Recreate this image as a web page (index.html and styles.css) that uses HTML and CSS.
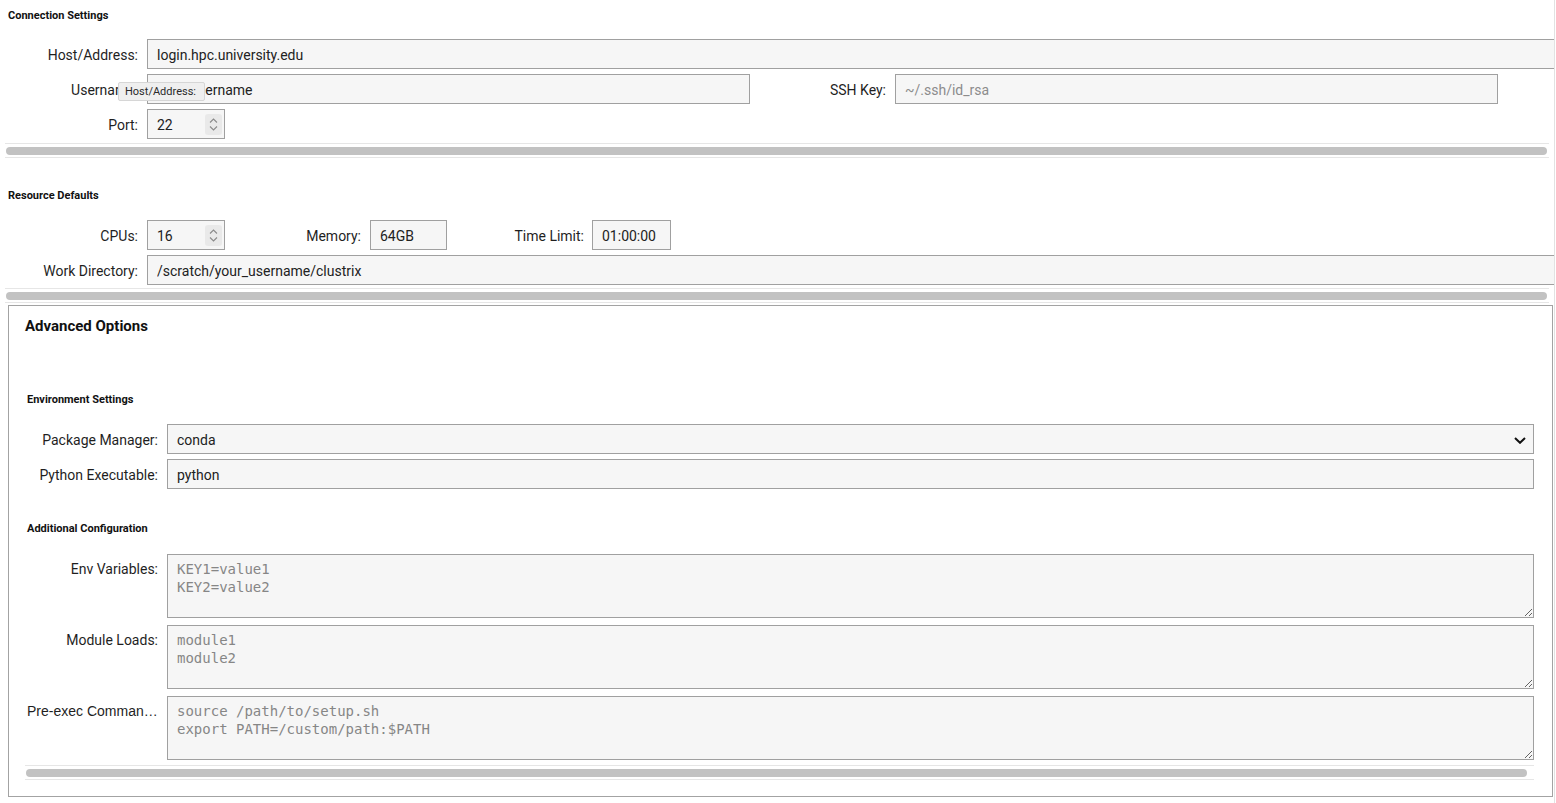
FILE: index.html
```html
<!DOCTYPE html>
<html lang="en">
<head>
  <meta charset="UTF-8" />
  <title>Cluster Settings</title>
  <link rel="stylesheet" href="styles.css">
</head>
<body>
<div class="page">

  <!-- Connection -->
  <section class="group group-conn">
    <h3 class="group-title">Connection Settings</h3>
    <div class="row">
      <label class="lbl" for="host">Host/Address:</label>
      <input class="field field-stretch" id="host" type="text" value="login.hpc.university.edu" />
    </div>
    <div class="row">
      <label class="lbl" for="user">Username:</label>
      <input class="field w-603" id="user" type="text" value="your_username" />
      <label class="lbl lbl-key" for="key">SSH Key:</label>
      <input class="field w-603" id="key" type="text" placeholder="~/.ssh/id_rsa" />
    </div>
    <div class="row">
      <label class="lbl">Port:</label>
      <div class="field spin">
        <span>22</span>
        <svg width="17" height="21" viewBox="0 0 17 21">
          <rect x="0" y="0" width="17" height="21" rx="3" fill="#e9e9e9"/>
          <path d="M5 8.5 L8.5 5 L12 8.5" stroke="#8a8a8a" stroke-width="1.1" fill="none"/>
          <path d="M5 12.5 L8.5 16 L12 12.5" stroke="#8a8a8a" stroke-width="1.1" fill="none"/>
        </svg>
      </div>
    </div>
    <div class="hscroll"><div class="thumb"></div></div>
  </section>

  <!-- Resources -->
  <section class="group group-res">
    <h3 class="group-title">Resource Defaults</h3>
    <div class="row">
      <label class="lbl">CPUs:</label>
      <div class="field spin">
        <span>16</span>
        <svg width="17" height="21" viewBox="0 0 17 21">
          <rect x="0" y="0" width="17" height="21" rx="3" fill="#e9e9e9"/>
          <path d="M5 8.5 L8.5 5 L12 8.5" stroke="#8a8a8a" stroke-width="1.1" fill="none"/>
          <path d="M5 12.5 L8.5 16 L12 12.5" stroke="#8a8a8a" stroke-width="1.1" fill="none"/>
        </svg>
      </div>
      <label class="lbl lbl-mem" for="mem">Memory:</label>
      <input class="field w-77" id="mem" type="text" value="64GB" />
      <label class="lbl lbl-time" for="time">Time Limit:</label>
      <input class="field w-79" id="time" type="text" value="01:00:00" />
    </div>
    <div class="row">
      <label class="lbl" for="workdir">Work Directory:</label>
      <input class="field field-stretch" id="workdir" type="text" value="/scratch/your_username/clustrix" />
    </div>
    <div class="hscroll hscroll-res"><div class="thumb"></div></div>
  </section>

  <!-- Advanced -->
  <section class="adv">
    <h2 class="adv-title">Advanced Options</h2>

    <h3 class="group-title env-title">Environment Settings</h3>
    <div class="row">
      <label class="lbl">Package Manager:</label>
      <div class="field combo w-full">
        <span>conda</span>
        <svg width="12" height="7" viewBox="0 0 12 7">
          <path d="M1 1 L6 5.8 L11 1" stroke="#111" stroke-width="2" fill="none"/>
        </svg>
      </div>
    </div>
    <div class="row">
      <label class="lbl" for="py">Python Executable:</label>
      <input class="field w-full" id="py" type="text" value="python" />
    </div>

    <h3 class="group-title extra-title">Additional Configuration</h3>
    <div class="row row-tall">
      <label class="lbl" for="envvars">Env Variables:</label>
      <textarea class="field w-full" id="envvars" placeholder="KEY1=value1&#10;KEY2=value2"></textarea>
    </div>
    <div class="row row-tall">
      <label class="lbl" for="modules">Module Loads:</label>
      <textarea class="field w-full" id="modules" placeholder="module1&#10;module2"></textarea>
    </div>
    <div class="row row-tall">
      <label class="lbl lbl-clip" for="preexec">Pre-exec Commands:</label>
      <textarea class="field w-full" id="preexec" placeholder="source /path/to/setup.sh&#10;export PATH=/custom/path:$PATH"></textarea>
    </div>
    <div class="hscroll hscroll-adv"><div class="thumb"></div></div>
  </section>

  <div class="tooltip">Host/Address:</div>
</div>
</body>
</html>
```

FILE: styles.css
```css
* {
  box-sizing: border-box;
}
body {
  margin: 0;
  font-family: Roboto, "Liberation Sans", sans-serif;
  font-size: 14px;
  color: #1f1f1f;
  background-color: #fff;
}
.page {
  position: relative;
  width: 1555px;
  height: 803px;
  border-right: 1px solid #e2e2e2;
  overflow: hidden;
}

/* section headings */
.group-title {
  margin: 0;
  font-size: 11px;
  font-weight: bold;
  line-height: 14px;
  color: #111;
}
.group {
  padding-left: 8px;
}
.group-conn .group-title {
  padding-top: 9px;
  margin-bottom: 16px;
}
.group-res .group-title {
  margin-top: 31px;
  margin-bottom: 17px;
}

/* form rows */
.row {
  display: flex;
  align-items: center;
  height: 30px;
  margin-bottom: 5px;
}
.lbl {
  flex: none;
  width: 139px;
  padding-top: 2px;
  padding-right: 9px;
  text-align: right;
  white-space: nowrap;
}
.lbl-key {
  width: 145px;
}
.lbl-mem {
  width: 145px;
}
.lbl-time {
  width: 145px;
  padding-right: 8px;
}

.field {
  flex: none;
  height: 30px;
  padding: 2px 9px 0;
  border: 1px solid #a0a0a0;
  border-radius: 0;
  background-color: #f6f6f6;
  font-family: inherit;
  font-size: 14px;
  color: #222;
  outline: none;
}
.field::placeholder {
  color: #8c8c8c;
}
.field-stretch {
  flex: 1;
  margin-right: -20px;
}
.w-603 { width: 603px; }
.w-77 { width: 77px; }
.w-79 { width: 79px; }
.w-full { width: 1367px; }

.spin {
  display: flex;
  align-items: center;
  justify-content: space-between;
  width: 78px;
  padding-right: 2px;
}
.spin svg {
  margin-top: -2px;
}
.combo {
  display: flex;
  align-items: center;
  justify-content: space-between;
  padding-right: 7px;
}

/* fake horizontal scrollbars (margin-top collapses with the row's 5px) */
.hscroll {
  width: 1544px;
  margin: -1px 0 0 -3px;
  padding: 3px 0 2px 1px;
  border-top: 1px solid #e6e6e6;
  border-bottom: 1px solid #e6e6e6;
}
.thumb {
  width: 1541px;
  height: 8px;
  border-radius: 4px;
  background-color: #c2c2c2;
}
.hscroll-res {
  margin-top: -2px;
}

/* advanced box */
.adv {
  width: 1545px;
  height: 492px;
  margin: 2px 0 0 8px;
  padding: 11px 0 0 18px;
  border: 1px solid #a3a3a3;
}
.adv-title {
  margin: 0 0 0 -2px;
  font-size: 15px;
  font-weight: bold;
  line-height: 18px;
  color: #111;
}
.env-title {
  margin-top: 58px;
  margin-bottom: 17px;
}
.extra-title {
  margin-top: 33px;
  margin-bottom: 18px;
}
.adv .lbl {
  width: 140px;
}
.row-tall {
  align-items: flex-start;
  height: 64px;
  margin-bottom: 7px;
}
.row-tall .lbl {
  padding-top: 6px;
  line-height: 18px;
}
.lbl-clip {
  overflow: hidden;
  text-overflow: ellipsis;
  text-align: left;
  font-family: "Liberation Sans", Arial, sans-serif;
}
.adv .lbl-clip {
  width: 131px;
  margin-right: 9px;
  padding-right: 0;
}
textarea.field {
  height: 64px;
  padding: 5px 9px;
  font-family: "DejaVu Sans Mono", monospace;
  font-size: 14px;
  line-height: 18px;
}
textarea.field::placeholder {
  color: #868686;
}
.hscroll-adv {
  width: 1509px;
  margin: -2px 0 0 -2px;
}
.hscroll-adv .thumb {
  width: 1501px;
}

.tooltip {
  position: absolute;
  left: 118px;
  top: 82px;
  width: 87px;
  height: 19px;
  padding-left: 6px;
  border: 1px solid #d6d6d6;
  border-radius: 2px;
  background-color: #efefef;
  font-size: 11px;
  line-height: 17px;
  color: #2a2a2a;
}
```
